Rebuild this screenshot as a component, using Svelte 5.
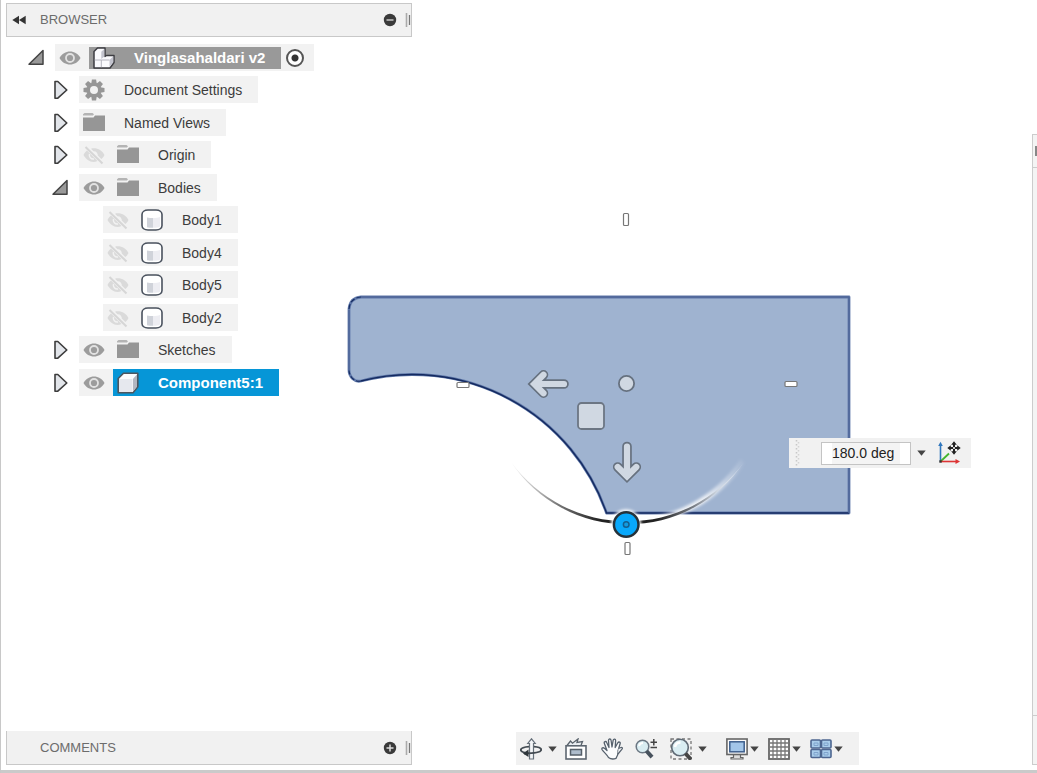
<script>
  const tree = [
    { label: 'Vinglasahaldari v2', level: 0, arrow: 'open', eye: 'on', icon: 'assembly', kind: 'root' },
    { label: 'Document Settings', level: 1, arrow: 'closed', icon: 'gear' },
    { label: 'Named Views', level: 1, arrow: 'closed', icon: 'folder' },
    { label: 'Origin', level: 1, arrow: 'closed', eye: 'off', icon: 'folder' },
    { label: 'Bodies', level: 1, arrow: 'open', eye: 'on', icon: 'folder' },
    { label: 'Body1', level: 2, eye: 'off', icon: 'body' },
    { label: 'Body4', level: 2, eye: 'off', icon: 'body' },
    { label: 'Body5', level: 2, eye: 'off', icon: 'body' },
    { label: 'Body2', level: 2, eye: 'off', icon: 'body' },
    { label: 'Sketches', level: 1, arrow: 'closed', eye: 'on', icon: 'folder' },
    { label: 'Component5:1', level: 1, arrow: 'closed', eye: 'on', icon: 'component', kind: 'active' }
  ];
  let angle = $state('180.0 deg');
</script>

{#snippet caret()}
  <svg class="caret" width="9" height="6" viewBox="0 0 9 6"><path d="M.3.5h8.4L4.5 5.7z" fill="#444" /></svg>
{/snippet}

{#snippet grip()}
  <svg width="6" height="16" viewBox="0 0 6 16"><path d="M1.5 1v14" stroke="#aaa" stroke-width="1.6" /><path d="M4.5 3v10" stroke="#777" stroke-width="1.3" /></svg>
{/snippet}

{#snippet nodeIcon(name)}
  <svg width="22" height="22" viewBox="0 0 22 22">
    {#if name === 'assembly'}
      <path d="M1 4.500 4.500 1H12v8.500L13.500 8.500H21v7L17 21H1z" fill="#fafafd" stroke="#3d3d42" stroke-width="1.500" stroke-linejoin="round" />
      <path d="M8.300 4.800 11.300 2v7.500L8.300 12zM16.500 13l3.700-3.800v6L16.500 20z" fill="#c3c4ce" />
      <path d="M1.700 13h6.600v7.200M8.300 13H16.500" stroke="#b4b4be" stroke-width="1" fill="none" />
    {:else if name === 'gear'}
      <g fill="#969696">
        {#each [0, 45, 90, 135] as turn}
          <path d="M8.900.5h4.200l.6 4v13l-.6 4H8.900l-.6-4v-13z" transform="rotate({turn} 11 11)" />
        {/each}
      </g>
      <circle cx="11" cy="11" r="7.300" fill="#969696" />
      <circle cx="11" cy="11" r="4" fill="#f2f2f2" />
    {:else if name === 'folder'}
      <path d="M0 5.500h10.500L12 3.500h10V19H0z" fill="#969696" />
      <path d="M1.500 1h8l1.500 1.200-1 1.300H0V2.200z" fill="#b4b4b4" />
    {:else if name === 'body'}
      <path d="M1 5.500C1 3 3.500 1 7 1h8c3.500 0 6 2 6 4.500v11c0 2.500-2.500 4.500-6 4.500H7c-3.500 0-6-2-6-4.500z" fill="#fff" stroke="#4a525e" stroke-width="1.600" />
      <path d="M6 8.500c2 .5 4 .6 6 .6v9.700c-2.500 0-4.500-.2-6-.6z" fill="#d0d3da" />
      <path d="M12 9.100c3 0 5-.4 7-1v9.300c-1.500 1-3.500 1.400-7 1.400z" fill="#ededf2" />
    {:else}
      <path d="M1.200 6.500 6.500 1.200H20.800v13.500L16 20.800H1.200z" fill="#fbfbfd" stroke="#4d565f" stroke-width="1.600" stroke-linejoin="round" />
      <path d="M2 7h13.500v13H2z" fill="#e6e8ee" />
      <path d="M16 6.800 20 2.500v12L16 19.500z" fill="#b3b7c1" />
    {/if}
  </svg>
{/snippet}

<div class="app">
  <svg class="canvas" aria-label="Sketch profile with move handles" role="img">
    <defs>
      <linearGradient id="arc" gradientUnits="userSpaceOnUse" x1="511" y1="0" x2="745" y2="0">
        <stop offset="0" stop-color="#999" stop-opacity="0.1" />
        <stop offset=".2" stop-color="#777" />
        <stop offset=".38" stop-color="#222" />
        <stop offset=".62" stop-color="#222" />
        <stop offset=".78" stop-color="#777c84" />
        <stop offset=".88" stop-color="#cdd5df" />
        <stop offset="1" stop-color="#fff" stop-opacity="0.2" />
      </linearGradient>
      <linearGradient id="glow" gradientUnits="userSpaceOnUse" x1="626" y1="0" x2="746" y2="0">
        <stop offset="0" stop-color="#fff" />
        <stop offset=".65" stop-color="#fff" stop-opacity=".8" />
        <stop offset="1" stop-color="#fff" stop-opacity="0" />
      </linearGradient>
      <filter id="soft" x="-20%" y="-20%" width="140%" height="140%"><feGaussianBlur stdDeviation="1.800" /></filter>
    </defs>
    <path d="M361 297H849V513H606.500A205.600 205.600 0 0 0 361 381C355 382.500 349 377 349 370V309Q350 298 361 297Z" fill="#9fb3d0" stroke="#6079aa" stroke-width="2.800" stroke-linejoin="round" />
    <path d="M849 513H606.500A205.600 205.600 0 0 0 361 381" fill="none" stroke="#142a60" stroke-width="1.400" />
    <path d="M349 309Q350 298 361 297M361 381C355 382.500 349 377 349 370" fill="none" stroke="#142a60" stroke-width="1.200" stroke-dasharray="5 2" />
    <path d="M361 297H849M849 297V513M349 310V371" fill="none" stroke="#4f6698" stroke-width="1.400" />

    <path d="M626 522.500A140 140 0 0 0 743 461" fill="none" stroke="url(#glow)" stroke-width="6" filter="url(#soft)" />
    <path d="M511 461A140 140 0 0 0 744 461A144 144 0 0 1 511 461Z" transform="translate(0 1)" fill="url(#arc)" />

    <g fill="none" stroke-linecap="round" stroke-linejoin="miter">
      <path d="M536 384H564M543.500 374.800 534.300 384 543.500 393.200" stroke="#66717f" stroke-width="9.600" />
      <path d="M536 384H564M543.500 374.800 534.300 384 543.500 393.200" stroke="#d0d8e2" stroke-width="6.200" />
      <path d="M627 475V446.500M617.700 467 627 476.300 636.300 467" stroke="#66717f" stroke-width="9.600" />
      <path d="M627 475V446.500M617.700 467 627 476.300 636.300 467" stroke="#d0d8e2" stroke-width="6.200" />
    </g>
    <rect x="578" y="403" width="26" height="26" rx="3.500" fill="#d0d8e2" stroke="#6c7683" stroke-width="1.800" />
    <circle cx="626.500" cy="383.500" r="7.600" fill="#d0d8e2" stroke="#66717f" stroke-width="1.800" />
    <circle cx="626" cy="524.500" r="15" fill="#fff" filter="url(#soft)" />
    <circle cx="626.200" cy="524.500" r="12.300" fill="#08a8fb" stroke="#26323a" stroke-width="2.500" />
    <circle cx="626.200" cy="524.500" r="2.800" fill="#129be0" stroke="#135f8f" stroke-width="1.500" />
    <g fill="#fff" stroke="#777" stroke-width="1.200">
      <rect x="623.500" y="213.500" width="5" height="12" rx="1" />
      <rect x="625" y="542.500" width="5" height="12" rx="1" />
      <rect x="457" y="382.500" width="12" height="5" rx="1" />
      <rect x="785" y="381.500" width="12" height="5" rx="1" />
    </g>
  </svg>

  <div class="workspace">
    <header class="panel">
      <button class="rewind" aria-label="Collapse browser">
        <svg width="14" height="10" viewBox="0 0 14 10"><path d="M7 .8v8.400L.3 5zM13.700.8v8.400L7 5z" fill="#333" /></svg>
      </button>
      <h2>BROWSER</h2>
      <button class="toggle" aria-label="Hide browser">
        <svg width="14" height="14" viewBox="0 0 14 14"><circle cx="7" cy="7" r="6.200" fill="#3a3a3a" /><path d="M3.500 7h7" stroke="#ddd" stroke-width="1.300" /></svg>
      </button>
      {@render grip()}
    </header>

    <ul class="tree">
      {#each tree as node}
        <li class="level{node.level} {node.kind ?? ''}">
          {#if node.arrow}
            <button class="expander" aria-label="Toggle {node.label}">
              <svg width="18" height="20" viewBox="0 0 18 20">
                {#if node.arrow === 'open'}
                  <path d="M2 16.300 16 2.500v13.800z" fill="#999" stroke="#444" stroke-width="1.500" stroke-linejoin="round" />
                {:else}
                  <path d="M4 1.500h2.800L15.800 10l-9 8.200H4z" fill="#e2e5ea" stroke="#3c3c3c" stroke-width="1.600" stroke-linejoin="round" />
                {/if}
              </svg>
            </button>
          {/if}
          <div class="chip">
            {#if node.eye}
              <button class="eye" aria-label="Visibility of {node.label}">
                <svg width="22" height="20" viewBox="0 0 22 20">
                  {#if node.eye === 'on'}
                    <path d="M.5 10C5 1.300 17 1.300 21.500 10 17 18.700 5 18.700.5 10z" fill="#9c9c9c" />
                    <circle cx="11" cy="10" r="4" fill="none" stroke="#e2e2e2" stroke-width="1.800" />
                  {:else}
                    <path d="M4 5.500 14.500 16C9 18.500 3.500 15.500.5 10 1.300 8.300 2.500 6.700 4 5.500zM8 3.700C13.500 2.300 18.700 4.800 21.500 10c-.8 1.600-1.800 3-3.200 4L14.800 10.500C15 8 13 6 10.500 6.200z" fill="#dadada" />
                    <path d="M6.500 9c-.8 3 1.500 5.500 4.500 5" fill="none" stroke="#f2f2f2" stroke-width="1.500" />
                    <path d="M2.500 2 19.500 18.500" stroke="#d6d6d6" stroke-width="2" />
                  {/if}
                </svg>
              </button>
            {/if}
            <div class="name">
              {@render nodeIcon(node.icon)}
              <span>{node.label}</span>
            </div>
            {#if node.kind === 'root'}
              <label class="activate">
                <input type="radio" name="active" checked aria-label="Activate component" />
              </label>
            {/if}
          </div>
        </li>
      {/each}
    </ul>

    <footer>
      <section class="panel comments">
        <h2>COMMENTS</h2>
        <button class="toggle" aria-label="Show comments">
          <svg width="14" height="14" viewBox="0 0 14 14"><circle cx="7" cy="7" r="6.200" fill="#3a3a3a" /><path d="M3.500 7h7M7 3.500v7" stroke="#ddd" stroke-width="1.500" /></svg>
        </button>
        {@render grip()}
      </section>

      <nav class="toolbar" aria-label="Navigation">
        <button class="wide after8" aria-label="Orbit">
          <svg width="22" height="22" viewBox="0 0 22 22">
            <path d="M9.500 21V5.500H7.800L11.500.8l3.700 4.700h-1.700V21z" fill="#f4f6f8" stroke="#66707a" stroke-width="1.200" />
            <path d="M9 8.600C3.500 9 .8 10.500.8 12c0 2 4 3 9 3.400M14 8.600c4.500.3 7.200 1.600 7.200 3.200 0 2.200-6 3.600-17 3.700" fill="none" stroke="#434b52" stroke-width="1.900" />
            <path d="M8.500 11.500v7.500L3 15.500z" fill="#2f363b" />
          </svg>
          {@render caret()}
        </button>
        <button class="after14" aria-label="Look at">
          <svg width="22" height="22" viewBox="0 0 22 22">
            <path d="M2 7.500 5.500 3l2 2.200L13 1l-1 3.500 5.500-1-1.500 4" fill="#e9edf1" stroke="#59626b" stroke-width="1.300" />
            <rect x="1" y="7.800" width="20" height="13.200" fill="#fff" stroke="#5d6670" stroke-width="1.600" />
            <rect x="5.500" y="11.500" width="11" height="5.500" fill="#aebccc" stroke="#555f69" stroke-width="1.500" />
          </svg>
        </button>
        <button class="after12" aria-label="Pan">
          <svg width="22" height="22" viewBox="0 0 22 22">
            <path d="M7.500 19.500C6 16.500 2.500 14 1 11.500c-.6-1.600 1.200-2.300 2.400-1.200L6 12.500 3.300 5.300c-.5-1.900 1.700-2.500 2.400-.8L8 9.500 7.500 2.500c0-2 2.400-2 2.600 0l.9 6.500 1.200-6.800c.4-1.700 2.500-1.400 2.400.4L14.200 9.500l2.600-4.700c1-1.500 2.900-.6 2.300 1L17 13c.5 3-.5 5-2 7.300-2 .8-5.500.7-7.500-.8z" fill="#fbfcfd" stroke="#56616d" stroke-width="1.300" stroke-linejoin="round" />
            <path d="M17.500 10.500l2.500-1c1.300-.3 1.800.8 1 1.700L17 16" fill="#f1f3f5" stroke="#56616d" stroke-width="1.200" />
          </svg>
        </button>
        <button class="after13" aria-label="Zoom">
          <svg width="22" height="22" viewBox="0 0 22 22">
            <circle cx="7.500" cy="8.500" r="6.300" fill="#d9edf2" stroke="#6b7783" stroke-width="1.500" />
            <path d="M11.500 13 17 19.200" stroke="#47525d" stroke-width="4" />
            <path d="M4 8c.5-2 2-3 4-3" stroke="#fff" stroke-width="2" fill="none" />
            <path d="M15.500 4.200H22M18.800 1v6.500M15.500 9.500H22" stroke="#444" stroke-width="1.500" />
          </svg>
        </button>
        <button class="wide after18" aria-label="Zoom window">
          <svg width="22" height="22" viewBox="0 0 22 22">
            <rect x="1" y="1" width="20" height="20" fill="none" stroke="#777" stroke-width="1.300" stroke-dasharray="3 2.500" />
            <circle cx="10" cy="9.500" r="8.300" fill="#d9edf2" stroke="#5f6a75" stroke-width="1.600" />
            <path d="M5 9c.5-3 2.500-4.500 5.500-4.500" stroke="#fff" stroke-width="2.500" fill="none" />
            <path d="M15.500 15.500 21 21.500" stroke="#444" stroke-width="4" />
          </svg>
          {@render caret()}
        </button>
        <button class="after9" aria-label="Display settings">
          <svg width="22" height="22" viewBox="0 0 22 22">
            <path d="M7.500 16.500h7v3H17V21H5v-1.500h2.500z" fill="#ddd" stroke="#666" stroke-width="1.200" />
            <rect x=".9" y="1" width="20.200" height="15.500" fill="#fafafa" stroke="#666" stroke-width="1.600" />
            <rect x="3.800" y="3.800" width="14.400" height="10" fill="#a3c6e9" stroke="#3e5f8d" stroke-width="1.500" />
          </svg>
          {@render caret()}
        </button>
        <button class="after9" aria-label="Grid and snaps">
          <svg width="22" height="22" viewBox="0 0 22 22">
            <rect x="1" y="1" width="20" height="20" fill="#fff" stroke="#666" stroke-width="1.800" />
            <path d="M5 1v20M9 1v20M13 1v20M17 1v20M1 5h20M1 9h20M1 13h20M1 17h20" stroke="#777" stroke-width="1.300" />
          </svg>
          {@render caret()}
        </button>
        <button aria-label="Viewports">
          <svg width="22" height="22" viewBox="0 0 22 22">
            <g fill="#a9cdeb" stroke="#4d6690" stroke-width="1.600">
              <rect x="1" y="2" width="9.500" height="8" rx="1" /><rect x="11.500" y="2" width="9.500" height="8" rx="1" />
              <rect x="1" y="11.500" width="9.500" height="8" rx="1" /><rect x="11.500" y="11.500" width="9.500" height="8" rx="1" />
            </g>
            <path d="M4 5h4v2.500H4zM14 5h4v2.500h-4zM4 14.500h4V17H4zM14 14.500h4V17h-4z" fill="none" stroke="#7fa3cc" />
          </svg>
          {@render caret()}
        </button>
      </nav>
    </footer>
  </div>

  <aside class="dock">
    <div class="dock-head"><i></i></div>
    <div class="dock-body"></div>
    <div class="dock-foot"></div>
  </aside>

  <div class="value">
    <svg width="5" height="26" viewBox="0 0 5 26"><path d="M1.500 0v26" stroke="#c8c8c8" stroke-width="1.500" stroke-dasharray="1.500 2.500" /><path d="M3.500 2v24" stroke="#d4d4d4" stroke-width="1.500" stroke-dasharray="1.500 2.500" /></svg>
    <input type="text" aria-label="Angle" bind:value={angle} />
    <button class="drop" aria-label="Angle options">{@render caret()}</button>
    <button aria-label="Set pivot">
      <svg width="24" height="24" viewBox="0 0 24 24">
        <path d="M3.500 20.500V4" stroke="#2f76bd" stroke-width="1.600" /><path d="M3.500.8 5.800 5H1.200z" fill="#2f76bd" />
        <path d="M3.500 20.500 12 12.500" stroke="#43b52d" stroke-width="1.800" />
        <path d="M3.500 20.500H19" stroke="#dd3434" stroke-width="1.600" /><path d="M23 20.500 18.500 18v5z" fill="#dd3434" />
        <rect x="2.300" y="19.300" width="2.400" height="2.400" fill="#333" />
        <path d="M12 7h10M17 2v10" stroke="#222" stroke-width="2" />
        <path d="M17 .3 19.800 3.800h-5.600zM17 13.700l2.800-3.500h-5.600zM10.300 7l3.500-2.800v5.600zM23.700 7l-3.500-2.800v5.600z" fill="#222" />
        <circle cx="17" cy="7" r="1" fill="#fff" />
      </svg>
    </button>
  </div>
</div>

<style>
  :global(body) {
    background: #fff;
  }
  .app {
    position: relative;
    display: flex;
    min-height: 100vh;
    box-sizing: border-box;
    padding: 3px 0 8px 6px;
    box-shadow: inset 1px 0 #c8c8c8, inset 0 -3px #cacaca;
    font: 14px/20px "Liberation Sans", Arial, sans-serif;
    color: #3c3c3c;
  }
  .canvas {
    position: absolute;
    inset: 0;
    width: 100%;
    height: 100%;
  }
  svg {
    display: block;
    flex: none;
  }
  button {
    display: flex;
    align-items: center;
    flex: none;
    padding: 0;
    border: 0;
    background: none;
  }
  .workspace {
    position: relative;
    flex: 1;
    display: flex;
    flex-direction: column;
  }
  .panel {
    display: flex;
    align-items: center;
    box-sizing: border-box;
    width: 406px;
    min-height: 34px;
    padding-left: 5px;
    background: #f1f1f1;
    border: 1px solid #c8c8c8;
  }
  .panel h2 {
    flex: 1;
    margin: 0;
    font-size: 13px;
    font-weight: 400;
    color: #6c6c6c;
  }
  .rewind {
    width: 28px;
  }
  .toggle {
    margin-right: 8px;
  }
  .tree {
    list-style: none;
    margin: 7px 0 0;
    padding: 0;
  }
  li {
    display: flex;
    align-items: center;
    margin-bottom: 5px;
  }
  li:nth-child(even) {
    margin-bottom: 6px;
  }
  .level0 {
    padding-left: 21px;
  }
  .level1 {
    padding-left: 45px;
  }
  .level2 {
    padding-left: 97px;
  }
  .expander {
    width: 28px;
  }
  .chip {
    display: flex;
    align-items: center;
    height: 27px;
    background: #f2f2f2;
  }
  .eye {
    padding: 0 8px 0 4px;
  }
  .name {
    display: flex;
    align-items: center;
    gap: 19px;
    padding: 0 16px 0 4px;
    white-space: nowrap;
  }
  .root .name,
  .active .name {
    font-size: 15px;
    font-weight: 700;
    color: #fff;
  }
  .root .name {
    height: 22px;
    background: #999;
  }
  .active .name {
    height: 27px;
    background: #0696d7;
  }
  .activate {
    display: flex;
    padding: 0 10px 0 5px;
  }
  .activate input {
    appearance: none;
    box-sizing: border-box;
    width: 18px;
    height: 18px;
    margin: 0;
    border: 2px solid #555;
    border-radius: 50%;
    background: radial-gradient(circle, #333 3px, #fff 4px);
  }
  footer {
    display: flex;
    align-items: flex-end;
    gap: 104px;
    margin-top: auto;
  }
  .comments {
    border-top: 0;
    padding-left: 33px;
  }
  .toolbar {
    display: flex;
    align-items: center;
    height: 33px;
    padding: 0 16px 0 4px;
    background: #f1f1f1;
  }
  .toolbar button {
    gap: 2px;
  }
  .toolbar .wide {
    gap: 6px;
  }
  .toolbar .after8 {
    margin-right: 8px;
  }
  .toolbar .after9 {
    margin-right: 9px;
  }
  .toolbar .after12 {
    margin-right: 12px;
  }
  .toolbar .after13 {
    margin-right: 13px;
  }
  .toolbar .after14 {
    margin-right: 14px;
  }
  .toolbar .after18 {
    margin-right: 19px;
  }
  .dock {
    position: relative;
    display: flex;
    flex-direction: column;
    width: 5px;
    box-sizing: border-box;
    margin-top: 131px;
    background: #f4f4f4;
    border: 1px solid #ccc;
    border-right: 0;
  }
  .dock-head {
    height: 32px;
    border-bottom: 1px solid #ccc;
  }
  .dock-head i {
    display: block;
    width: 2px;
    height: 10px;
    margin: 11px 0 0 2px;
    background: #888;
  }
  .dock-body {
    flex: 1;
  }
  .dock-foot {
    height: 48px;
    border-top: 1px solid #ccc;
  }
  .value {
    position: absolute;
    left: 789px;
    top: 438px;
    display: flex;
    align-items: center;
    height: 30px;
    padding: 0 10px 0 6px;
    background: #f1f1f1;
  }
  .value input {
    box-sizing: border-box;
    width: 90px;
    height: 23px;
    margin: 0 6px 0 21px;
    padding: 0 10px;
    border: 1px solid #c4c4c4;
    background: linear-gradient(#f4f4f4, #f4f4f4) content-box, #fff;
    font: inherit;
    color: #222;
  }
  .drop {
    margin-right: 11px;
  }
</style>
